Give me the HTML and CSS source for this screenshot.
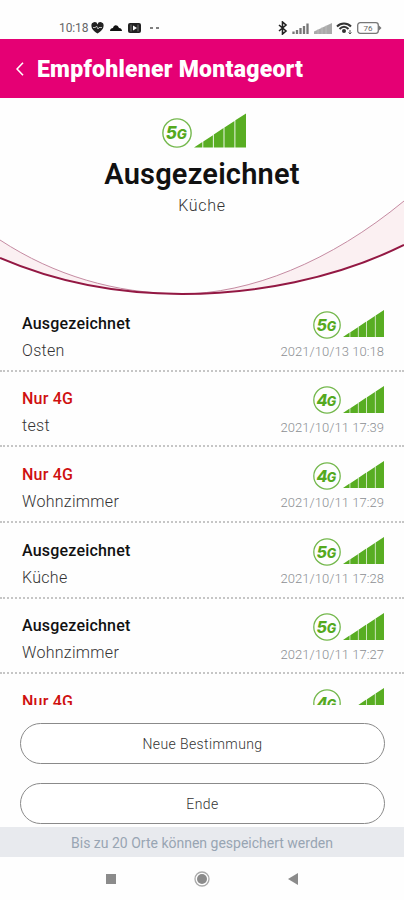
FILE: index.html
```
<!DOCTYPE html>
<html lang="de">
<head>
  <meta charset="UTF-8">
  <meta name="viewport" content="width=device-width, initial-scale=1.0">
  <title>Empfohlener Montageort</title>
  <link rel="stylesheet" href="styles.css">
</head>
<body>
  <!-- shared icons -->
  <svg class="sprite" width="0" height="0">
    <symbol id="bars" viewBox="0 0 41 27">
      <path d="M0 27 6.600 22.600V27zM7.300 22.200 14.900 17.200V27H7.300zM15.600 16.700 23.300 11.600V27H15.600zM24 11.200 31.900 6V27H24zM32.600 5.500 41 0V27H32.600z"/>
    </symbol>
  </svg>

  <div class="status-bar">
    <div class="status-left">
      <span class="clock">10:18</span>
      <svg width="13" height="12" viewBox="0 0 13 12"><path d="M6.500 11.500C2 8.500.5 6.500.5 4A3 3 0 0 1 6.500 2.500 3 3 0 0 1 12.500 4C12.500 6.500 11 8.500 6.500 11.500z" fill="#222"/><path d="M2 5.500h2.500l1-1.500 1.500 3 1-1.500H11" fill="none" stroke="#ddd" stroke-width=".8"/></svg>
      <svg width="12" height="6" viewBox="0 0 12 6"><path d="M0 6C0 4 1.500 3 3 3 3.500 1 5 0 6.500.5 8 .7 8.500 2 9 3 11 3 12 4.500 12 6z" fill="#111"/></svg>
      <svg width="13" height="10" viewBox="0 0 13 10"><rect width="13" height="10" rx="2" fill="#222"/><path d="M3 1.500v7M10 1.500v7" stroke="#777"/><path d="M5 2.500v5L9 5z" fill="#fff"/></svg>
      <svg class="dots" width="9" height="2" viewBox="0 0 9 2"><path d="M0 1h3M6 1h3" stroke="#555" stroke-width="1.500"/></svg>
    </div>
    <div class="status-right">
      <svg width="10" height="14" viewBox="0 0 10 14"><path d="M1 4l7 6-3.500 3V1L8 4 1 10" fill="none" stroke="#222" stroke-width="1.600"/></svg>
      <svg width="18" height="11" viewBox="0 0 18 11"><path d="M1.500 11V8.500M5 11V7M8.500 11V5M12 11V3M15.500 11V.5" stroke="#777" stroke-width="2.300"/></svg>
      <svg width="18" height="11" viewBox="0 0 18 11"><path d="M0 11V8.500L18 0V11z" fill="#aaa"/><path d="M4 11V6M8 11V4M12 11V2.500" stroke="#c4c4c4" stroke-width=".7"/></svg>
      <svg width="17" height="13" viewBox="0 0 17 13"><path d="M1 4.500C5 .5 11 .5 15 4.500M3.500 7C6.500 4 9.500 4 12.500 7" fill="none" stroke="#333" stroke-width="2"/><circle cx="8" cy="9" r="2" fill="#333"/><path d="M14 8v4M12.500 10.500 14 12l1.500-1.500" fill="none" stroke="#555"/></svg>
      <svg width="25" height="12" viewBox="0 0 25 12"><rect x=".7" y=".7" width="20.600" height="10.600" rx="2.500" fill="none" stroke="#777" stroke-width="1.300"/><path d="M22 3.500 24.500 6 22 8.500z" fill="#777"/><text class="battery" x="11" y="9" text-anchor="middle">76</text></svg>
    </div>
  </div>

  <div class="header">
    <svg class="back" width="8" height="14" viewBox="0 0 8 14"><path d="M7 .7 1 7 7 13.300" fill="none" stroke="#fff" stroke-width="1.600"/></svg>
    <h1>Empfohlener Montageort</h1>
  </div>

  <div class="hero">
    <svg class="curve" viewBox="0 98 404 200">
      <path d="M0 240C55 276 115 293 180 294 250 294 330 262 404 201V245C335 279 255 294 182 294 120 294 58 283 0 258z" fill="#fbf0f2"/>
      <path d="M0 240C55 276 115 293 180 294 250 294 330 262 404 201" fill="none" stroke="#c58ba2"/>
      <path d="M0 258C58 283 120 294 182 294 255 294 335 279 404 245" fill="none" stroke="#931843" stroke-width="2"/>
    </svg>
    <div class="hero-signal">
      <svg class="badge" viewBox="0 0 28 28"><circle cx="14" cy="14" r="13.200"/><text x="3.500" y="19.500">5</text><text class="small" x="13.800" y="19.500">G</text></svg>
      <svg class="bars"><use href="#bars"/></svg>
    </div>
    <h2>Ausgezeichnet</h2>
    <p>Küche</p>
  </div>

  <div class="result-list">
    <div class="result-item">
      <div class="result-text">
        <div class="rating">Ausgezeichnet</div>
        <div class="place">Osten</div>
      </div>
      <div class="result-side">
        <div class="signal">
          <svg class="badge" viewBox="0 0 28 28"><circle cx="14" cy="14" r="13.200"/><text x="3.500" y="19.500">5</text><text class="small" x="13.800" y="19.500">G</text></svg>
          <svg class="bars"><use href="#bars"/></svg>
        </div>
        <div class="time">2021/10/13 10:18</div>
      </div>
    </div>
    <div class="result-item">
      <div class="result-text">
        <div class="rating only-4g">Nur 4G</div>
        <div class="place">test</div>
      </div>
      <div class="result-side">
        <div class="signal">
          <svg class="badge" viewBox="0 0 28 28"><circle cx="14" cy="14" r="13.200"/><text x="3.500" y="19.500">4</text><text class="small" x="13.800" y="19.500">G</text></svg>
          <svg class="bars"><use href="#bars"/></svg>
        </div>
        <div class="time">2021/10/11 17:39</div>
      </div>
    </div>
    <div class="result-item">
      <div class="result-text">
        <div class="rating only-4g">Nur 4G</div>
        <div class="place">Wohnzimmer</div>
      </div>
      <div class="result-side">
        <div class="signal">
          <svg class="badge" viewBox="0 0 28 28"><circle cx="14" cy="14" r="13.200"/><text x="3.500" y="19.500">4</text><text class="small" x="13.800" y="19.500">G</text></svg>
          <svg class="bars"><use href="#bars"/></svg>
        </div>
        <div class="time">2021/10/11 17:29</div>
      </div>
    </div>
    <div class="result-item">
      <div class="result-text">
        <div class="rating">Ausgezeichnet</div>
        <div class="place">Küche</div>
      </div>
      <div class="result-side">
        <div class="signal">
          <svg class="badge" viewBox="0 0 28 28"><circle cx="14" cy="14" r="13.200"/><text x="3.500" y="19.500">5</text><text class="small" x="13.800" y="19.500">G</text></svg>
          <svg class="bars"><use href="#bars"/></svg>
        </div>
        <div class="time">2021/10/11 17:28</div>
      </div>
    </div>
    <div class="result-item">
      <div class="result-text">
        <div class="rating">Ausgezeichnet</div>
        <div class="place">Wohnzimmer</div>
      </div>
      <div class="result-side">
        <div class="signal">
          <svg class="badge" viewBox="0 0 28 28"><circle cx="14" cy="14" r="13.200"/><text x="3.500" y="19.500">5</text><text class="small" x="13.800" y="19.500">G</text></svg>
          <svg class="bars"><use href="#bars"/></svg>
        </div>
        <div class="time">2021/10/11 17:27</div>
      </div>
    </div>
    <div class="result-item">
      <div class="result-text">
        <div class="rating only-4g">Nur 4G</div>
      </div>
      <div class="result-side">
        <div class="signal">
          <svg class="badge" viewBox="0 0 28 28"><circle cx="14" cy="14" r="13.200"/><text x="3.500" y="19.500">4</text><text class="small" x="13.800" y="19.500">G</text></svg>
          <svg class="bars"><use href="#bars"/></svg>
        </div>
      </div>
    </div>
  </div>

  <div class="button-group">
    <button>Neue Bestimmung</button>
    <button>Ende</button>
  </div>

  <div class="hint">Bis zu 20 Orte können gespeichert werden</div>

  <div class="nav-bar">
    <svg width="10" height="10"><rect width="10" height="10" fill="#8b8b8b"/></svg>
    <svg width="16" height="16"><circle cx="8" cy="8" r="7" fill="none" stroke="#aaa" stroke-width="1.300"/><circle cx="8" cy="8" r="5" fill="#8b8b8b"/></svg>
    <svg width="10" height="12"><path d="M10 0V12L0 6z" fill="#8b8b8b"/></svg>
  </div>
</body>
</html>
```
FILE: styles.css
```
* {
  box-sizing: border-box;
  margin: 0;
  padding: 0;
}

body {
  display: flex;
  flex-direction: column;
  width: 404px;
  height: 900px;
  overflow: hidden;
  font-family: Roboto, "Liberation Sans", sans-serif;
  color: #111;
  background-color: #fefefe;
}

svg {
  display: block;
  flex: none;
}

.sprite {
  position: absolute;
}

/* status bar */
.status-bar {
  display: flex;
  justify-content: space-between;
  height: 39px;
  padding: 17px 22px 0 59px;
}

.status-left,
.status-right {
  display: flex;
  align-items: center;
  height: 22px;
}

.status-left {
  gap: 6px;
}

.clock {
  margin-right: -3px;
  font-size: 12px;
  letter-spacing: -0.1px;
  color: #666;
}

.dots {
  margin-left: 3px;
}

.status-right {
  gap: 4px;
}

.battery {
  font-size: 8px;
  fill: #666;
}

/* header */
.header {
  display: flex;
  align-items: center;
  gap: 13px;
  height: 59px;
  padding: 1px 0 0 16px;
  background-color: #e50074;
}

.header h1 {
  font-size: 23px;
  font-weight: 900;
  letter-spacing: 0.25px;
  color: #fff;
}

/* recommended place */
.hero {
  position: relative;
  display: flex;
  flex-direction: column;
  align-items: center;
  height: 198px;
  padding-top: 15px;
}

.curve {
  position: absolute;
  top: 0;
  left: 0;
  width: 404px;
  height: 200px;
}

.hero-signal,
.signal {
  display: flex;
  align-items: flex-end;
}

.hero-signal {
  gap: 2px;
  margin-left: 3px;
}

.badge {
  width: 28px;
  height: 28px;
  fill: none;
  stroke: #74b84d;
  stroke-width: 1.3;
}

.badge text {
  font-family: Inter, Roboto, sans-serif;
  font-size: 16px;
  font-style: italic;
  font-weight: 800;
  fill: #55a91f;
  stroke: none;
}

.badge .small {
  font-size: 12.5px;
}

.bars {
  width: 41px;
  height: 27px;
  fill: #58ad22;
}

.hero-signal .badge {
  width: 30px;
  height: 30px;
}

.hero-signal .bars {
  width: 52px;
  height: 35px;
}

.hero h2 {
  margin-top: 8px;
  font-size: 29px;
  font-weight: 600;
  line-height: 36px;
  letter-spacing: 0.2px;
}

.hero p {
  margin-top: 4px;
  font-size: 16px;
  font-weight: 300;
  line-height: 20px;
  letter-spacing: 0.7px;
  color: #333;
}

/* saved results */
.result-list {
  height: 409px;
  overflow: hidden;
}

.result-item {
  display: flex;
  justify-content: space-between;
  height: 75.7px;
  padding: 14px 20px 0 22px;
  border-bottom: 2px dotted #c6c6c6;
}

.rating {
  margin-top: 3.5px;
  font-size: 16px;
  font-weight: 500;
  line-height: 20px;
  letter-spacing: 0.2px;
}

.only-4g {
  color: #cf1010;
}

.place {
  margin-top: 7px;
  font-size: 16px;
  font-weight: 300;
  line-height: 20px;
  letter-spacing: 0.3px;
  color: #333;
}

.result-side {
  display: flex;
  flex-direction: column;
  align-items: flex-end;
}

.signal {
  gap: 2px;
}

.signal .badge {
  margin-bottom: -1.5px;
}

.time {
  margin-top: 7px;
  font-size: 13px;
  font-weight: 300;
  line-height: 16px;
  letter-spacing: 0.05px;
  color: #8c8f93;
}

/* buttons */
.button-group {
  display: flex;
  flex-direction: column;
  gap: 19px;
  height: 122px;
  padding: 18px 19px 0 20px;
}

button {
  flex: none;
  height: 41px;
  border: 1px solid #8a8a8a;
  border-radius: 21px;
  font-family: inherit;
  font-size: 14px;
  font-weight: 300;
  letter-spacing: 0.4px;
  color: #333;
  background-color: #fff;
}

/* bottom */
.hint {
  height: 30px;
  font-size: 14px;
  line-height: 32px;
  text-align: center;
  color: #98a5b3;
  background-color: #e8eaee;
}

.nav-bar {
  display: flex;
  align-items: center;
  justify-content: center;
  gap: 78px;
  height: 43px;
  padding-right: 1px;
}
```
